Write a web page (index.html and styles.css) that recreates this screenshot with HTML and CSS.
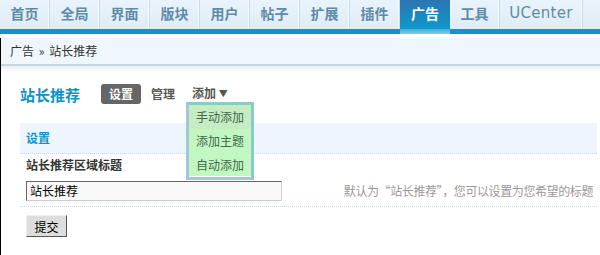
FILE: index.html
```html
<!DOCTYPE html>
<html lang="zh-CN">
  <head>
    <meta charset="UTF-8" />
    <meta name="viewport" content="width=device-width, initial-scale=1.0" />
    <title>站长推荐</title>
    <link rel="stylesheet" href="styles.css">
  </head>
  <body>
    <ul class="nav">
      <li><a href="#">首页</a></li>
      <li><a href="#">全局</a></li>
      <li><a href="#">界面</a></li>
      <li><a href="#">版块</a></li>
      <li><a href="#">用户</a></li>
      <li><a href="#">帖子</a></li>
      <li><a href="#">扩展</a></li>
      <li><a href="#">插件</a></li>
      <li class="on"><a href="#">广告</a></li>
      <li><a href="#">工具</a></li>
      <li class="uc"><a href="#">UCenter</a></li>
    </ul>

    <div class="main">
      <div class="crumb">广告 <span class="raquo">&raquo;</span> 站长推荐</div>
      <div class="shade"></div>

      <div class="content">
        <div class="title_row">
          <h3>站长推荐</h3>
          <a href="#" class="sub current">设置</a>
          <a href="#" class="sub">管理</a>
          <div class="sub add">
            添加 <span class="arr">&#9660;</span>
            <ul class="drop">
              <li class="hover">手动添加</li>
              <li>添加主题</li>
              <li>自动添加</li>
            </ul>
          </div>
        </div>

        <div class="tb">
          <div class="tb_head">设置</div>
          <div class="tb_label">站长推荐区域标题</div>
          <div class="tb_row">
            <input type="text" class="txt" value="站长推荐" />
            <span class="tips">默认为“站长推荐”，您可以设置为您希望的标题</span>
          </div>
          <button class="btn">提交</button>
        </div>
      </div>
    </div>
  </body>
</html>
```

FILE: styles.css
```css
* {
  margin: 0;
  padding: 0;
  box-sizing: border-box;
}
li {
  list-style: none;
}
a {
  text-decoration: none;
}
body {
  width: 600px;
  height: 255px;
  overflow: hidden;
  background: #fff;
  font-family: "Noto Sans CJK SC", sans-serif;
  font-size: 12px;
  color: #333;
}

/* 상단 메뉴 */
.nav {
  display: flex;
  height: 34px;
  background: linear-gradient(#e9f3fb, #dfedf8);
  border-bottom: 5px solid #0a97c9;
}
.nav li {
  width: 50px;
  height: 29px;
  border-right: 1px solid #c9dcea;
  box-shadow: inset -1px 0 0 #f4f9fd;
}
.nav li a {
  display: block;
  text-align: center;
  line-height: 27px;
  font-size: 14px;
  font-weight: bold;
  color: #5f8ba8;
}
.nav li.uc {
  width: 83px;
}
.nav li.uc a {
  font-family: "DejaVu Sans", sans-serif;
  font-weight: normal;
  font-size: 15px;
  letter-spacing: 0.3px;
}
.nav li.on {
  height: 34px;
  border-right: 0;
  box-shadow: none;
  background: linear-gradient(#2b75b1 0, #0e98cc 29px, #3aaed9 29px, #86cbe8 34px);
}
.nav li.on a {
  color: #fff;
}

/* 본문 */
.main {
  margin-top: 4px;
  border-left: 1px solid #000;
  height: 217px;
}
.crumb {
  height: 28px;
  line-height: 26px;
  padding-left: 9px;
  background: #f0f7fc;
  border-bottom: 2px solid #c4d7e3;
  color: #333;
}
.raquo {
  margin: 0 2px;
}
.shade {
  height: 6px;
  background: linear-gradient(#e6eef3, #fff);
}
.content {
  padding: 12px 3px 0 19px;
}
.title_row {
  display: flex;
  align-items: center;
  height: 20px;
}
.title_row h3 {
  font-size: 15px;
  color: #0a94c8;
  margin-right: 21px;
}
.sub {
  font-weight: bold;
  color: #555;
  line-height: 20px;
}
.sub.current {
  width: 40px;
  text-align: center;
  background: #666;
  color: #fff;
  border-radius: 3px;
  margin-right: 10px;
}
.sub.add {
  position: relative;
  margin-left: 17px;
}
.arr {
  font-size: 9px;
  position: relative;
  top: -1px;
}
.drop {
  position: absolute;
  left: -6px;
  top: 19px;
  width: 68px;
  border: 3px solid;
  border-color: #86cdc5 #86cdc5 #a4c6d6 #a4c6d6;
  background: #c2f6c2;
  box-shadow: inset 0 -1px 0 #fff;
  z-index: 2;
}
.drop li {
  height: 24px;
  line-height: 24px;
  text-align: center;
  font-weight: normal;
  color: #3f6a45;
}
.drop li.hover {
  background: #c6ecc4;
}

/* 설정 표 */
.tb {
  margin-top: 19px;
}
.tb_head {
  height: 31px;
  line-height: 30px;
  padding-left: 6px;
  background: #eef5fc;
  border-bottom: 1px dotted #c6dcec;
  font-weight: bold;
  color: #0a94c8;
}
.tb_label {
  height: 22px;
  line-height: 22px;
  padding-left: 6px;
  font-weight: bold;
}
.tb_row {
  display: flex;
  justify-content: space-between;
  align-items: center;
  height: 31px;
  padding: 0 4px 1px 6px;
  border-bottom: 1px dotted #c6dcec;
}
.txt {
  width: 256px;
  height: 20px;
  padding-left: 3px;
  background: #f9f9f9;
  border: 1px solid;
  border-color: #666 #ccc #ccc #666;
  font-family: "Noto Sans CJK SC", sans-serif;
  font-size: 12px;
  color: #000;
}
.tips {
  color: #999;
  letter-spacing: -0.4px;
}
.btn {
  margin: 8px 0 0 6px;
  width: 41px;
  height: 22px;
  background: #ddd;
  border: 1px solid;
  border-color: #eee #555 #555 #eee;
  font-family: "Noto Sans CJK SC", sans-serif;
  font-size: 12px;
  color: #000;
}
```
